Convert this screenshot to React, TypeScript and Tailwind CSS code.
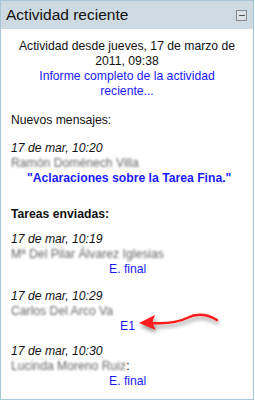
export default function App() {
  const blurName = "text-[#666] blur-[1.3px] select-none whitespace-nowrap";
  return (
    <div className="w-[255px] h-[402px] bg-white" style={{ fontFamily: '"Liberation Sans", Arial, sans-serif' }}>
      <div className="w-[254px] h-[400px] border border-[#a9c6d6] flex flex-col">
        {/* Header */}
        <div className="h-[28px] bg-[#cddae1] flex items-center justify-between pl-[5px] pr-[6px] shrink-0">
          <h2 className="text-[15.5px] text-[#111] leading-none">Actividad reciente</h2>
          <button className="w-[11px] h-[11px] border border-[#8a8a8a] bg-[#d9e2e7] flex items-center justify-center">
            <span className="block w-[6px] h-[1px] bg-[#555]" />
          </button>
        </div>

        {/* Body */}
        <div className="relative flex-1 px-[10px] pt-[10px] text-[12.2px] leading-[15px] text-[#111]">
          <div className="text-center">
            <div className="px-[6px]">Actividad desde jueves, 17 de marzo de 2011, 09:38</div>
            <a className="text-[#1a1aff] block px-[22px]">Informe completo de la actividad reciente...</a>
          </div>

          <div className="mt-[14px]">Nuevos mensajes:</div>

          <div className="mt-[13px]">
            <div className="italic">17 de mar, 10:20</div>
            <div className={blurName}>Ramón Doménech Villa</div>
            <div className="pl-[16px] font-bold text-[#1a1aff] whitespace-nowrap">"Aclaraciones sobre la Tarea Fina."</div>
          </div>

          <div className="mt-[21px] font-bold">Tareas enviadas:</div>

          <div className="mt-[10px]">
            <div className="italic">17 de mar, 10:19</div>
            <div className={blurName}>Mª Del Pilar Álvarez Iglesias</div>
            <div className="pl-[98px] text-[#1a1aff]">E. final</div>
          </div>

          <div className="mt-[12px]">
            <div className="italic">17 de mar, 10:29</div>
            <div className={blurName}>Carlos Del Arco Va</div>
            <div className="pl-[109px] text-[#1a1aff]">E1</div>
          </div>

          <div className="mt-[10px]">
            <div className="italic">17 de mar, 10:30</div>
            <div>
              <span className={blurName}>Lucinda Moreno Ruiz</span>:
            </div>
            <div className="pl-[98px] text-[#1a1aff]">E. final</div>
          </div>

          {/* red arrow annotation */}
          <svg className="absolute left-[136px] top-[280px]" width="90" height="30" viewBox="0 0 90 30">
            <defs>
              <filter id="sh" x="-20%" y="-50%" width="140%" height="200%">
                <feDropShadow dx="1" dy="3" stdDeviation="2" floodColor="#000" floodOpacity="0.45" />
              </filter>
            </defs>
            <g filter="url(#sh)">
              <path d="M14 14 C 30 15, 40 14, 50 9 C 58 5, 68 4, 80 11" fill="none" stroke="#ff1a1a" strokeWidth="2.5" strokeLinecap="round" />
              <path d="M2 14 L 18 6 L 15 14 L 19 21 Z" fill="#ff1a1a" />
            </g>
          </svg>
        </div>
      </div>
    </div>
  );
}
